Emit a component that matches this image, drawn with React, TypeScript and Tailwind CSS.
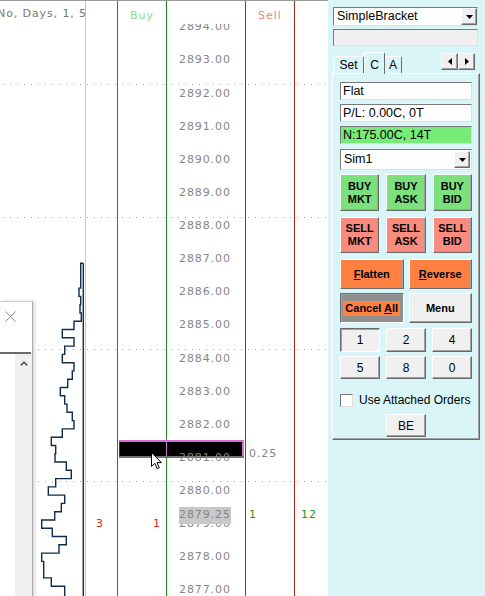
import React from 'react'

const prices = Array.from({ length: 18 }, (_, i) => `${2894 - i}.00`)

// volume profile, left edge of each 0.25 tick step (page px)
const profile = [
  80.7, 80.7, 80.7, 79, 80.7, 80, 81.3, 74, 62.3, 74, 64.7, 62.3, 74, 72.3, 67.7, 60.3, 64.7, 67, 72.3, 74,
  62.3, 51.3, 55.7, 55, 66.3, 71.3, 55.7, 48.3, 64.7, 61.3, 54.7, 41.7, 52.3, 66.3, 59, 41.7, 43.7, 43.7,
  51.3, 64.7, 64.7,
]

function profilePath() {
  const y0 = 263.3
  const h = 8.28
  let d = `M83.3 ${y0} H${profile[0]}`
  for (let i = 1; i < profile.length; i++) {
    d += ` V${(y0 + h * i).toFixed(1)} H${profile[i]}`
  }
  return d + ' V600'
}

const raised =
  'border border-t-white border-l-white border-r-[#6b6b6b] border-b-[#6b6b6b] shadow-[inset_-1px_-1px_0_#a0a0a0]'
const pressed =
  'border border-t-[#6b6b6b] border-l-[#6b6b6b] border-r-white border-b-white shadow-[inset_1px_1px_0_#a0a0a0]'
const field = 'border border-t-[#7a7a7a] border-l-[#7a7a7a] border-r-[#dedede] border-b-[#dedede]'

function Rows({ cells }: { cells: Record<number, React.ReactNode> }) {
  return (
    <div className="-mt-[13px] flex flex-col">
      {Array.from({ length: 18 }, (_, i) => (
        <div key={i} className="relative z-10 flex h-[33.125px] items-center">
          {cells[i]}
        </div>
      ))}
    </div>
  )
}

function DropButton() {
  return (
    <div className={`flex h-full w-[16px] items-center justify-center bg-[#f0f0f0] ${raised}`}>
      <svg width="7" height="4" viewBox="0 0 7 4">
        <path d="M0 0h7L3.5 4z" fill="#000" />
      </svg>
    </div>
  )
}

function Chart() {
  const priceCells: Record<number, React.ReactNode> = {}
  prices.forEach((p, i) => {
    priceCells[i] = (
      <>
        <span className="pl-[12px]">{p}</span>
        {i === 15 && (
          <span className="absolute left-[12px] top-[-1px] flex h-[17px] items-center bg-[#c8c8c8] text-[#858585]">
            2879.25
          </span>
        )}
      </>
    )
  })

  return (
    <div className="relative flex h-full w-[328px] border-t border-[#9a9a9a] bg-white font-['DejaVu_Sans',sans-serif] text-[11px] tracking-[0.9px] text-[#858585]">
      {/* chart column */}
      <div className="flex w-[86px] flex-col border-r border-[#c6c6c6]">
        <div className="h-[23px] overflow-hidden whitespace-nowrap pt-[5px] text-[#777]">
          <span className="-ml-[3px] inline-block">No, Days, 1, 50</span>
        </div>
      </div>

      {/* bid volume */}
      <div className="flex w-[32px] flex-col border-r border-[#1d8a1d]">
        <div className="h-[23px]" />
        <div className="flex-1 overflow-hidden">
          <Rows cells={{ 15: <span className="pl-[10px] text-[#d42a1f]">3</span> }} />
        </div>
      </div>

      {/* buy */}
      <div className="flex w-[49px] flex-col border-r border-[#1d8a1d]">
        <div className="h-[23px] pt-[7px] text-center text-[#8ddc8d] tracking-[1px]">Buy</div>
        <div className="flex-1 overflow-hidden">
          <Rows cells={{ 15: <span className="w-full pr-[5px] text-right text-[#d42a1f]">1</span> }} />
        </div>
      </div>

      {/* price */}
      <div className="flex w-[79px] flex-col border-r border-[#a3291c]">
        <div className="h-[23px]" />
        <div className="flex-1 overflow-hidden">
          <Rows cells={priceCells} />
        </div>
      </div>

      {/* sell */}
      <div className="flex w-[49px] flex-col border-r border-[#a3291c]">
        <div className="h-[23px] pt-[7px] text-center text-[#ec8b80] tracking-[1px]">Sell</div>
        <div className="flex-1 overflow-hidden">
          <Rows
            cells={{
              13: <span className="-translate-y-[4px] pl-[3px]">0.25</span>,
              15: <span className="-translate-y-[9px] pl-[3px] text-[#1a9a1a]">1</span>,
            }}
          />
        </div>
      </div>

      {/* ask volume */}
      <div className="flex flex-1 flex-col">
        <div className="h-[23px]" />
        <div className="flex-1 overflow-hidden">
          <Rows cells={{ 15: <span className="-translate-y-[9px] pl-[6px] text-[#1a9a1a]">12</span> }} />
        </div>
      </div>

      {/* grid lines */}
      {[83, 216, 348, 480].map((t) => (
        <div
          key={t}
          className="absolute left-0 right-0 h-px bg-[repeating-linear-gradient(to_right,transparent_0_3px,#a5a5a5_3px_4px,transparent_4px_7px)]"
          style={{ top: t }}
        />
      ))}

      {/* volume profile */}
      <svg className="absolute left-0 top-[-1px]" width="86" height="597" viewBox="0 0 86 597">
        <path d="M83.3 263.3 V600" stroke="#0e2c4e" strokeWidth="1.4" fill="none" />
        <path d={profilePath()} stroke="#0e2c4e" strokeWidth="1.4" fill="none" />
      </svg>

      {/* order bar */}
      <div className="absolute left-[119px] top-[439px] flex h-[18px] w-[125px] border-b-2 border-t-2 border-b-[#707070] border-t-[#d46fd4] bg-black">
        <div className="w-[47px] border-l border-[#3a3a3a]" />
        <div className="w-px bg-[#d46fd4]" />
        <div className="flex-1 border-r-2 border-[#d46fd4]" />
      </div>

      {/* mouse cursor */}
      <svg className="absolute left-[151px] top-[451px] z-20" width="12" height="19" viewBox="0 0 12 19">
        <path d="M0.5 0.5 L0.5 14.5 L3.8 11.3 L6.2 16.8 L8.3 15.9 L6 10.6 L10.4 10.6 Z" fill="#fff" stroke="#000" strokeWidth="1" />
      </svg>

      {/* floating window */}
      <div className="absolute left-0 top-[300px] z-30 flex h-[300px] w-[33px] flex-col border-r border-t border-r-[#a9a9a9] border-t-[#cfcfcf] bg-white shadow-[2px_0_3px_rgba(0,0,0,0.15)]">
        <div className="h-[50px]">
          <svg className="ml-[5px] mt-[9px]" width="11" height="11" viewBox="0 0 11 11">
            <path d="M0.5 0.5 L10.5 10.5 M10.5 0.5 L0.5 10.5" stroke="#8a8a8a" strokeWidth="1" />
          </svg>
        </div>
        <div className="h-[2px] w-[31px] bg-[#6b6b6b]" />
        <div className="flex flex-1">
          <div className="w-[15px]" />
          <div className="flex w-[17px] justify-center bg-[#f0f0f0] pt-[7px]">
            <svg width="8" height="5" viewBox="0 0 8 5">
              <path d="M0.8 4.4 L4 1.2 L7.2 4.4" stroke="#555" strokeWidth="1.6" fill="none" />
            </svg>
          </div>
        </div>
      </div>
    </div>
  )
}

function Btn({ className, children }: { className: string; children: React.ReactNode }) {
  return <div className={`flex items-center justify-center ${className}`}>{children}</div>
}

function Panel() {
  return (
    <div className="flex w-[157px] flex-col bg-[#daf5f8] pl-[4px] font-['Liberation_Sans',Arial,sans-serif] text-[12.5px] text-black">
      {/* strategy */}
      <div className={`ml-[1px] mt-[7px] flex h-[19px] w-[145px] items-center bg-white ${field}`}>
        <span className="flex-1 pl-[3px]">SimpleBracket</span>
        <DropButton />
      </div>
      <div className={`ml-[1px] mt-[3px] h-[17px] w-[145px] bg-[#f0f0f0] ${field}`} />

      {/* tabs */}
      <div className="mt-[6px] flex h-[21px] w-[148px] items-end text-[12px]">
        <div className="ml-[1px] flex h-[17px] w-[31px] items-center justify-center rounded-t-[2px] border-l border-r border-t border-l-white border-r-[#6b6b6b] border-t-white">
          Set
        </div>
        <div className="relative z-10 -mb-px flex h-[22px] w-[21px] justify-center rounded-t-[2px] border-l border-r border-t border-l-white border-r-[#6b6b6b] border-t-white bg-[#daf5f8] pt-[3px]">
          C
        </div>
        <div className="flex h-[17px] w-[17px] items-center justify-center rounded-t-[2px] border-r border-t border-r-[#6b6b6b] border-t-white">
          A
        </div>
        <div className="mb-[3px] ml-auto mr-[5px] flex h-[17px]">
          <div className={`flex w-[17px] items-center justify-center bg-[#f0f0f0] ${raised}`}>
            <svg width="4" height="7" viewBox="0 0 4 7">
              <path d="M4 0v7L0 3.5z" fill="#000" />
            </svg>
          </div>
          <div className={`flex w-[17px] items-center justify-center bg-[#f0f0f0] ${raised}`}>
            <svg width="4" height="7" viewBox="0 0 4 7">
              <path d="M0 0v7L4 3.5z" fill="#000" />
            </svg>
          </div>
        </div>
      </div>

      {/* tab page */}
      <div className={`flex h-[367px] w-[148px] flex-col px-[7px] pb-[2px] ${raised}`}>
        <div className={`mt-[8px] flex h-[18px] items-center bg-white pl-[2px] ${field}`}>Flat</div>
        <div className={`mt-[4px] flex h-[18px] items-center bg-white pl-[2px] ${field}`}>P/L: 0.00C, 0T</div>
        <div className={`mt-[4px] flex h-[18px] items-center bg-[#78ea78] pl-[2px] ${field}`}>N:175.00C, 14T</div>
        <div className={`mt-[5px] flex h-[21px] items-center bg-white ${field}`}>
          <span className="flex-1 pl-[3px]">Sim1</span>
          <div className="h-[17px] pr-[1px]">
            <DropButton />
          </div>
        </div>

        <div className="mt-[4px] grid h-[37px] grid-cols-3 gap-x-[7px] text-[11px] font-bold leading-[13px]">
          {['MKT', 'ASK', 'BID'].map((s) => (
            <Btn key={s} className={`flex-col bg-[#7ce07c] ${raised}`}>
              <span>BUY</span>
              <span>{s}</span>
            </Btn>
          ))}
        </div>
        <div className="mt-[6px] grid h-[36px] grid-cols-3 gap-x-[7px] text-[11px] font-bold leading-[13px]">
          {['MKT', 'ASK', 'BID'].map((s) => (
            <Btn key={s} className={`flex-col bg-[#f98b7f] ${raised}`}>
              <span>SELL</span>
              <span>{s}</span>
            </Btn>
          ))}
        </div>

        <div className="mt-[6px] grid h-[30px] grid-cols-2 gap-x-[5px] text-[11px] font-bold">
          <Btn className={`bg-[#ff8040] ${raised}`}>
            <span>
              <span className="underline">F</span>latten
            </span>
          </Btn>
          <Btn className={`bg-[#ff8040] ${raised}`}>
            <span>
              <span className="underline">R</span>everse
            </span>
          </Btn>
        </div>
        <div className="mt-[4px] grid h-[30px] grid-cols-2 gap-x-[5px] text-[11px] font-bold">
          <Btn className={`bg-[#8f8f8f] ${pressed}`}>
            <span className="bg-[#ff8040] px-[2px] leading-[15px]">
              Cancel <span className="underline">A</span>ll
            </span>
          </Btn>
          <Btn className={`bg-[#f0f0f0] ${raised}`}>Menu</Btn>
        </div>

        <div className="mt-[5px] grid h-[24px] grid-cols-3 gap-x-[6px] text-[12px]">
          <Btn className={`bg-[#f0f0f0] ${pressed}`}>1</Btn>
          <Btn className={`bg-[#f0f0f0] ${raised}`}>2</Btn>
          <Btn className={`bg-[#f0f0f0] ${raised}`}>4</Btn>
        </div>
        <div className="mt-[4px] grid h-[23px] grid-cols-3 gap-x-[6px] text-[12px]">
          <Btn className={`bg-[#f0f0f0] ${raised}`}>5</Btn>
          <Btn className={`bg-[#f0f0f0] ${raised}`}>8</Btn>
          <Btn className={`bg-[#f0f0f0] ${raised}`}>0</Btn>
        </div>

        <div className="mt-[15px] flex h-[12px] items-center text-[12px]">
          <div className={`h-[13px] w-[13px] bg-white ${field}`} />
          <span className="ml-[6px]">Use Attached Orders</span>
        </div>

        <Btn className={`mx-auto mt-[8px] h-[23px] w-[40px] bg-[#f0f0f0] text-[12px] ${raised}`}>BE</Btn>
      </div>
    </div>
  )
}

export default function App() {
  return (
    <div className="flex h-[596px] w-[485px] overflow-hidden bg-white">
      <Chart />
      <Panel />
    </div>
  )
}
